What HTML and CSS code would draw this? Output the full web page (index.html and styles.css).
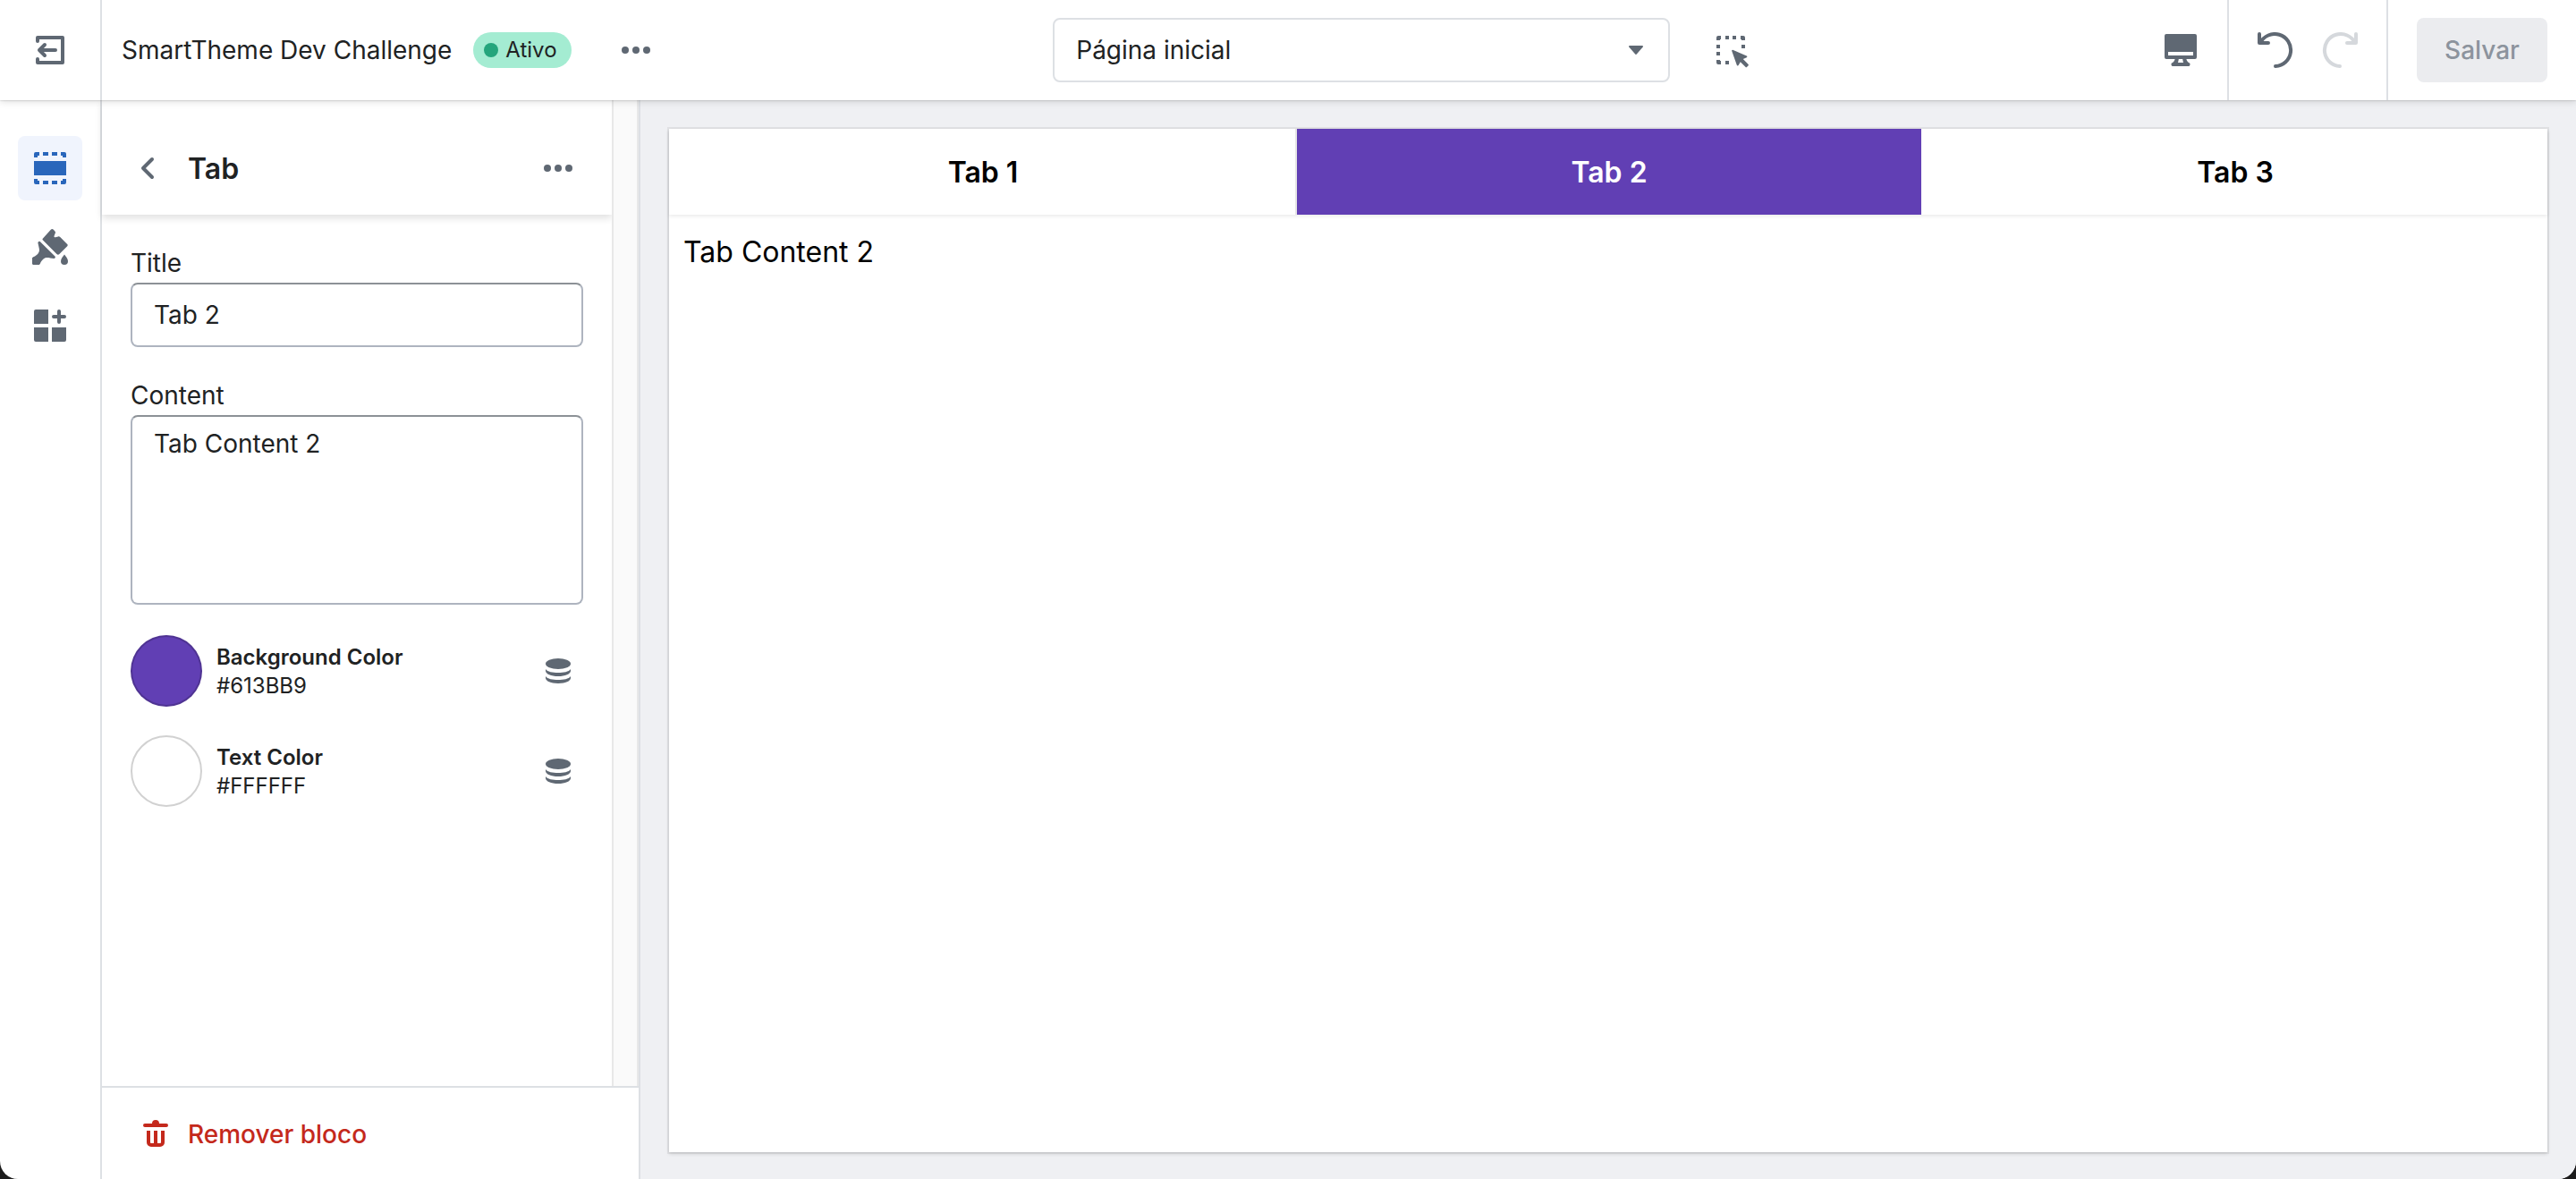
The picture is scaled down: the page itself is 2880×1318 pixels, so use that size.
FILE: index.html
```html
<!DOCTYPE html>
<html lang="pt-BR">
<head>
<meta charset="utf-8">
<meta name="viewport" content="width=device-width, initial-scale=1">
<title>SmartTheme Dev Challenge</title>
<link rel="stylesheet" href="styles.css">
</head>
<body>
<div class="app">
  <header class="topbar">
    <a class="exit" href="#" aria-label="Sair">
      <svg class="icon" viewBox="0 0 20 20"><path d="M2 5V3a1 1 0 0 1 1-1h14a1 1 0 0 1 1 1v14a1 1 0 0 1-1 1H3a1 1 0 0 1-1-1v-2a1 1 0 0 1 2 0v1h12V4H4v1a1 1 0 0 1-2 0z"/><path d="M7 7l-3 3 3 3M4 10h9" fill="none" stroke="currentColor" stroke-width="2" stroke-linecap="round" stroke-linejoin="round"/></svg>
    </a>
    <div class="theme">
      <span class="theme-name">SmartTheme Dev Challenge</span>
      <span class="badge">Ativo</span>
      <button class="icon-button" type="button" aria-label="Mais ações">
        <svg class="icon" viewBox="0 0 20 20"><circle cx="4" cy="10" r="2"/><circle cx="10" cy="10" r="2"/><circle cx="16" cy="10" r="2"/></svg>
      </button>
    </div>
    <div class="page-picker">
      <div class="select-wrap">
        <select class="select" aria-label="Página"><option>Página inicial</option></select>
        <svg class="caret" viewBox="0 0 16 10"><path d="M1 0h14a1 1 0 0 1 .8 1.600L8.800 9.500a1 1 0 0 1-1.600 0L.2 1.600A1 1 0 0 1 1 0z"/></svg>
      </div>
      <button class="icon-button" type="button" aria-label="Inspecionar">
        <svg class="icon" viewBox="0 0 20 20"><path d="M3 2h1.500v2H4v.5H2V3a1 1 0 0 1 1-1zM7 2h2v2H7zM11 2h2v2h-2zM15.500 2H17a1 1 0 0 1 1 1v1.500h-2V4h-.5zM2 7h2v2H2zM16 7h2v2h-2zM2 11h2v2H2zM2 15.500h2v.5h.5v2H3a1 1 0 0 1-1-1zM7 16h2v2H7zM11.400 10l7.500 3.200a.5.5 0 0 1 0 .9l-2 .9 2.800 2.900a.6.600 0 0 1 0 .9l-.6.6a.6.600 0 0 1-.9 0L15.400 16.600l-1.100 1.900a.5.500 0 0 1-.9-.1l-2.700-7.700a.5.500 0 0 1 .7-.7z"/></svg>
      </button>
    </div>
    <div class="actions">
      <button class="icon-button device" type="button" aria-label="Computador">
        <svg class="icon" viewBox="0 0 20 20"><path fill-rule="evenodd" d="M2 1h16a1 1 0 0 1 1 1v12a1 1 0 0 1-1 1h-4.800c.2.800.6 1.500 1.300 2a1 1 0 0 1-.5 2H6a1 1 0 0 1-.5-2c.7-.5 1.100-1.200 1.300-2H2a1 1 0 0 1-1-1V2a1 1 0 0 1 1-1zM3 11v2h14v-2zM8.900 15c-.1.700-.2 1.300-.4 2h3c-.2-.7-.3-1.300-.4-2z"/></svg>
      </button>
      <div class="history">
        <button class="icon-button" type="button" aria-label="Desfazer">
          <svg class="icon" viewBox="0 0 20 20"><path d="M1 1v5h5M1.500 6A9 9 0 1 1 10 19" fill="none" stroke="currentColor" stroke-width="2" stroke-linecap="round" stroke-linejoin="round"/></svg>
        </button>
        <button class="icon-button" type="button" aria-label="Refazer" disabled>
          <svg class="icon" viewBox="0 0 20 20"><path d="M19 1v5h-5M18.500 6A9 9 0 1 0 10 19" fill="none" stroke="currentColor" stroke-width="2" stroke-linecap="round" stroke-linejoin="round"/></svg>
        </button>
      </div>
      <div class="save-area"><button class="save" type="button" disabled>Salvar</button></div>
    </div>
  </header>

  <div class="workspace">
    <nav class="rail" aria-label="Editor">
      <a class="rail-item active" href="#" aria-label="Seções">
        <svg class="icon" viewBox="0 0 20 20"><path d="M2 1h2v2H3v1H1V2a1 1 0 0 1 1-1zM6 1h3v2H6zM11 1h3v2h-3zM16 1h2a1 1 0 0 1 1 1v2h-2V3h-1zM1 6h18v8H1zM1 16h2v1h1v2H2a1 1 0 0 1-1-1zM6 17h3v2H6zM11 17h3v2h-3zM17 16h2v2a1 1 0 0 1-1 1h-2v-2h1z"/></svg>
      </a>
      <a class="rail-item" href="#" aria-label="Configurações do tema">
        <svg class="icon" viewBox="0 0 20 20"><path d="M10.400.4a1.100 1.100 0 0 1 1.500 0l.8.800c.3.300.4.700.2 1.100l-.6 1.600c-.2.500.2.900.7.700l1.500-.4c.4-.1.800 0 1 .2l4.100 4.100a.8.800 0 0 1 0 1.100l-4.400 4.400a1.100 1.100 0 0 1-1.500 0L6 6.300a.8.800 0 0 1 0-1.100zM4.600 7.200a.8.800 0 0 0-1.400.5c.4 2.100 1.100 3.800.6 5-.5 1.300-1.400 1.900-2.300 2.500a2.700 2.700 0 1 0 3.300 3.300c.6-.9 1.200-1.800 2.500-2.400 1.200-.4 3 .1 4.800.4.800.1 1.100-.9.500-1.400zM18 14.300c.8 1 2 2.400 2 3.700a2 2 0 0 1-4 0c0-1.300 1.200-2.700 2-3.700z"/></svg>
      </a>
      <a class="rail-item" href="#" aria-label="Apps">
        <svg class="icon" viewBox="0 0 20 20"><path d="M2 1h7v8H1V2a1 1 0 0 1 1-1zM1 11h8v8H2a1 1 0 0 1-1-1zM11 11h8v7a1 1 0 0 1-1 1h-7zM14 2a1 1 0 0 1 2 0v2h2a1 1 0 0 1 0 2h-2v2a1 1 0 0 1-2 0V6h-2a1 1 0 0 1 0-2h2z"/></svg>
      </a>
    </nav>

    <aside class="panel">
      <div class="panel-scroll">
        <div class="panel-main">
          <div class="panel-header">
            <button class="icon-button" type="button" aria-label="Voltar">
              <svg class="icon" viewBox="0 0 20 20"><path d="m12 5-5 5 5 5" fill="none" stroke="currentColor" stroke-width="2" stroke-linecap="round" stroke-linejoin="round"/></svg>
            </button>
            <h1 class="panel-title">Tab</h1>
            <button class="icon-button" type="button" aria-label="Mais ações">
              <svg class="icon" viewBox="0 0 20 20"><circle cx="4" cy="10" r="2"/><circle cx="10" cy="10" r="2"/><circle cx="16" cy="10" r="2"/></svg>
            </button>
          </div>
          <form class="settings">
            <div class="field">
              <label for="title">Title</label>
              <input class="control" id="title" type="text" value="Tab 2">
            </div>
            <div class="field">
              <label for="content">Content</label>
              <textarea class="control area" id="content">Tab Content 2</textarea>
            </div>
            <div class="color-row">
              <button class="swatch purple" type="button" aria-label="Background Color"></button>
              <div class="color-text"><strong>Background Color</strong><span>#613BB9</span></div>
              <button class="icon-button" type="button" aria-label="Fonte dinâmica">
                <svg class="icon" viewBox="0 0 20 20"><ellipse cx="10" cy="6" rx="7" ry="3"/><path d="M3 9c1 1.500 4 2 7 2s6-.5 7-2v1c0 1.700-3.100 3-7 3s-7-1.300-7-3zM3 13c1 1.500 4 2 7 2s6-.5 7-2v1c0 1.700-3.100 3-7 3s-7-1.300-7-3z"/></svg>
              </button>
            </div>
            <div class="color-row">
              <button class="swatch" type="button" aria-label="Text Color"></button>
              <div class="color-text"><strong>Text Color</strong><span>#FFFFFF</span></div>
              <button class="icon-button" type="button" aria-label="Fonte dinâmica">
                <svg class="icon" viewBox="0 0 20 20"><ellipse cx="10" cy="6" rx="7" ry="3"/><path d="M3 9c1 1.500 4 2 7 2s6-.5 7-2v1c0 1.700-3.100 3-7 3s-7-1.300-7-3zM3 13c1 1.500 4 2 7 2s6-.5 7-2v1c0 1.700-3.100 3-7 3s-7-1.300-7-3z"/></svg>
              </button>
            </div>
          </form>
        </div>
        <div class="gutter"></div>
      </div>
      <div class="panel-footer">
        <button class="remove" type="button">
          <svg class="icon" viewBox="0 0 20 20"><path d="M8 4a2 2 0 0 1 4 0h4a1 1 0 0 1 0 2H4a1 1 0 0 1 0-2h4zM5 14.500V8h2v6.500a.5.500 0 0 0 .5.500H9V8h2v7h1.500a.5.500 0 0 0 .5-.5V8h2v6.500a2.500 2.500 0 0 1-2.500 2.500h-5A2.500 2.500 0 0 1 5 14.500z"/></svg>
          Remover bloco
        </button>
      </div>
    </aside>

    <main class="preview">
      <div class="frame">
        <div class="tabs" role="tablist">
          <button class="tab" role="tab" type="button">Tab 1</button>
          <button class="tab selected" role="tab" type="button" aria-selected="true">Tab 2</button>
          <button class="tab" role="tab" type="button">Tab 3</button>
        </div>
        <div class="tab-content" role="tabpanel">Tab Content 2</div>
      </div>
    </main>
  </div>
</div>
</body>
</html>
```
FILE: styles.css
```css
*,
*::before,
*::after {
  box-sizing: border-box;
}

body {
  margin: 0;
  background: #1c1c1c;
  color: #202223;
  font: 28px/40px Inter, "Liberation Sans", sans-serif;
}

button,
input,
select,
textarea {
  margin: 0;
  font: inherit;
  color: inherit;
}

button {
  padding: 0;
  border: 0;
  background: none;
}

.app {
  display: flex;
  flex-direction: column;
  min-height: 100vh;
  overflow: hidden;
  border-radius: 0 0 20px 20px;
  background: #fff;
}

.icon {
  display: block;
  flex: none;
  width: 40px;
  height: 40px;
  fill: currentColor;
}

.icon-button {
  display: grid;
  place-items: center;
  width: 72px;
  height: 72px;
  color: #5f6873;
}

.icon-button:disabled {
  color: #d5d8dc;
}

/* Top bar */

.topbar {
  position: relative;
  z-index: 1;
  display: grid;
  grid-template-columns: 114px auto 1fr auto;
  height: 112px;
  background: #fff;
  box-shadow: 0 0 2px rgba(0, 0, 0, 0.3), 0 2px 8px rgba(0, 0, 0, 0.12);
}

.exit {
  display: grid;
  place-items: center;
  border-right: 2px solid #dde0e4;
  color: #5f6873;
}

.theme {
  display: flex;
  align-items: center;
  padding-left: 22px;
}

.badge {
  display: flex;
  align-items: center;
  gap: 8px;
  height: 40px;
  margin: 0 36px 0 24px;
  padding: 0 16px 0 12px;
  border-radius: 20px;
  background: #a4ecd2;
  font-size: 24px;
}

.badge::before {
  content: "";
  width: 16px;
  height: 16px;
  border-radius: 50%;
  background: #24a57c;
}

.page-picker {
  display: flex;
  align-items: center;
  justify-content: center;
  gap: 32px;
}

.select-wrap {
  display: grid;
  align-items: center;
}

.select-wrap > * {
  grid-area: 1 / 1;
}

.select {
  appearance: none;
  width: 690px;
  height: 72px;
  padding: 0 24px;
  border: 2px solid #dde0e4;
  border-radius: 8px;
  background: #fff;
}

.caret {
  justify-self: end;
  width: 16px;
  height: 10px;
  margin-right: 30px;
  fill: #5f6873;
  pointer-events: none;
}

.actions {
  display: flex;
  justify-content: flex-end;
}

.device {
  align-self: center;
  margin-right: 16px;
}

.history {
  display: flex;
  align-items: center;
  padding: 0 16px;
  border: solid #dde0e4;
  border-width: 0 2px;
}

.save-area {
  display: flex;
  align-items: center;
  padding: 0 32px;
}

.save {
  width: 146px;
  height: 72px;
  border-radius: 8px;
  background: #ebecef;
  color: #8c939d;
  font-weight: 500;
}

/* Side rail */

.workspace {
  display: grid;
  grid-template-columns: 114px 602px 1fr;
  flex: 1;
}

.rail {
  display: flex;
  flex-direction: column;
  align-items: center;
  gap: 16px;
  padding-top: 40px;
  border-right: 2px solid #dde0e4;
}

.rail-item {
  display: grid;
  place-items: center;
  width: 72px;
  height: 72px;
  border-radius: 8px;
  color: #5f6873;
}

.rail-item.active {
  background: #f0f4fd;
  color: #2966bb;
}

/* Settings panel */

.panel {
  display: flex;
  flex-direction: column;
  border-right: 2px solid #dde0e4;
}

.panel-scroll {
  display: flex;
  flex: 1;
}

.panel-main {
  flex: 1;
}

.gutter {
  width: 30px;
  border: solid #e8e8e8;
  border-width: 0 2px;
  background: #fafafa;
}

.panel-header {
  display: flex;
  align-items: center;
  height: 128px;
  padding: 24px 24px 0 16px;
  box-shadow: 0 4px 8px rgba(0, 0, 0, 0.12);
}

.panel-title {
  flex: 1;
  margin: 0 0 0 8px;
  padding-top: 2px;
  font-size: 32px;
  font-weight: 600;
}

.settings {
  padding: 34px 32px 32px;
}

.field {
  display: flex;
  flex-direction: column;
  gap: 2px;
  margin-bottom: 34px;
}

.control {
  width: 100%;
  height: 72px;
  padding: 0 24px;
  border: 2px solid #aeb4bf;
  border-top-color: #8c9196;
  border-radius: 8px;
  outline: 0;
  background: #fff;
}

.area {
  height: 212px;
  padding-top: 10px;
  resize: none;
}

.color-row {
  display: flex;
  align-items: center;
  gap: 16px;
  margin-bottom: 32px;
  margin-right: -8px;
}

.swatch {
  width: 80px;
  height: 80px;
  border: 2px solid rgba(0, 0, 0, 0.18);
  border-radius: 50%;
}

.purple {
  background: #613fb4;
}

.color-text {
  display: flex;
  flex: 1;
  flex-direction: column;
  padding-top: 2px;
  font-size: 24px;
  line-height: 32px;
}

.color-text strong {
  font-weight: 600;
}

.panel-footer {
  height: 104px;
  padding: 16px 40px;
  border-top: 2px solid #dde0e4;
}

.remove {
  display: flex;
  align-items: center;
  gap: 16px;
  height: 72px;
  color: #c4291c;
  font-weight: 500;
}

/* Store preview */

.preview {
  display: flex;
  padding: 32px 32px 30px;
  background: #eff0f3;
}

.frame {
  flex: 1;
  background: #fff;
  color: #000;
  font-size: 32px;
  box-shadow: 0 0 0 2px rgba(0, 0, 0, 0.06), 0 2px 4px rgba(0, 0, 0, 0.14);
}

.tabs {
  display: grid;
  grid-template-columns: repeat(3, 1fr);
  box-shadow: 0 2px 4px rgba(0, 0, 0, 0.08);
}

.tab {
  height: 96px;
  padding-top: 2px;
  border-left: 2px solid transparent;
  font-weight: 600;
}

.tab.selected {
  border-left-color: #e6e6e6;
  background: #613fb4;
  background-clip: padding-box;
  color: #fff;
}

.tab-content {
  padding: 22px 16px;
}
```
